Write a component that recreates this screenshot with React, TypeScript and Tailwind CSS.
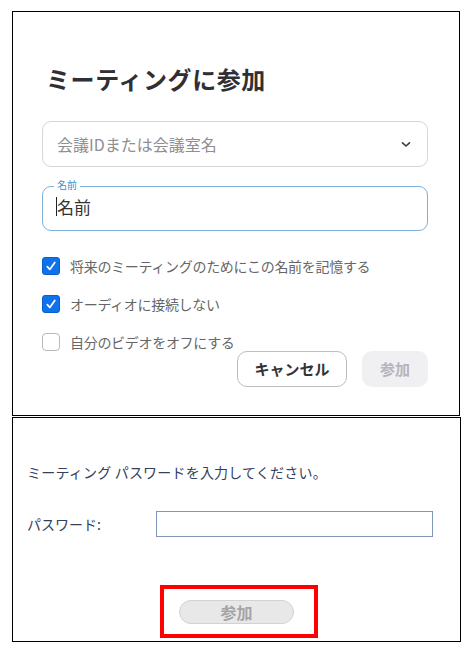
import React from "react";

const JP = { fontFamily: '"Noto Sans CJK JP", "Noto Sans", sans-serif' };

function Check({ checked }: { checked: boolean }) {
  if (checked) {
    return (
      <div className="w-[18px] h-[18px] rounded-[3px] bg-[#0e72ed] border border-[#0a5fc8] flex items-center justify-center shrink-0">
        <svg width="12" height="12" viewBox="0 0 12 12">
          <path d="M2.3 6.6 L4.8 9.4 L9.8 2.4" fill="none" stroke="#ffffff" strokeWidth="1.7" strokeLinecap="round" strokeLinejoin="round" />
        </svg>
      </div>
    );
  }
  return <div className="w-[18px] h-[18px] rounded-[4px] bg-white border-[1.5px] border-[#b9b9b9] shrink-0" />;
}

function Row({ checked, label, className }: { checked: boolean; label: string; className?: string }) {
  return (
    <div className={"flex items-center h-[18px] " + (className ?? "")}>
      <Check checked={checked} />
      <span className="ml-[10px] text-[14px] leading-[18px] tracking-[-0.3px] text-[#666666]">{label}</span>
    </div>
  );
}

export default function App() {
  return (
    <div className="bg-white w-[471px] h-[654px] overflow-hidden" style={JP}>
      <div className="ml-[12px] pt-[11px]">
        {/* Top panel */}
        <div className="w-[448px] h-[405px] border border-black bg-white pl-[29px] flex flex-col">
          <h1 className="mt-[55px] ml-[4px] text-[24px] leading-[24px] font-bold text-[#2f2f35] tracking-[0.6px]">
            ミーティングに参加
          </h1>
          <div className="mt-[30px] w-[386px] h-[46px] rounded-[9px] border border-[#d6d6d6] flex items-center justify-between pl-[14px] pr-[16px]">
            <span className="text-[16px] text-[#8e8e93]">会議IDまたは会議室名</span>
            <svg width="10" height="7" viewBox="0 0 10 7">
              <path d="M1.5 1.8 L5 5 L8.5 1.8" fill="none" stroke="#3a3a3a" strokeWidth="1.6" strokeLinecap="round" strokeLinejoin="round" />
            </svg>
          </div>
          <div className="relative mt-[19px] w-[386px] h-[45px] rounded-[9px] border-[1.5px] border-[#7fb0d8] flex items-center pl-[13px] pb-[4px]">
            <span className="absolute left-[11px] top-[-8px] bg-white px-[3px] text-[10px] leading-[12px] text-[#3d8fd1]">名前</span>
            <span className="w-[1px] h-[19px] bg-[#222]" />
            <span className="text-[17px] leading-[20px] text-[#333]">名前</span>
          </div>
          <Row checked label="将来のミーティングのためにこの名前を記憶する" className="mt-[26px]" />
          <Row checked label="オーディオに接続しない" className="mt-[20px]" />
          <Row checked={false} label="自分のビデオをオフにする" className="mt-[20px]" />
          <div className="w-[386px] flex justify-end gap-[15px]">
            <button className="w-[110px] h-[36px] rounded-[10px] border-[1.5px] border-[#bdbdbd] bg-white text-[15px] font-bold text-[#333]">
              キャンセル
            </button>
            <button className="w-[66px] h-[36px] rounded-[10px] bg-[#f0f0f3] text-[15px] font-bold text-[#b4b4bb]">
              参加
            </button>
          </div>
        </div>
        {/* Bottom panel */}
        <div className="mt-[1px] w-[449px] h-[225px] border border-black bg-white pl-[14px] flex flex-col">
          <p className="mt-[44px] text-[14px] leading-[20px] text-[#34405e] tracking-[0.2px]">
            ミーティング パスワードを入力してください。
          </p>
          <div className="mt-[29px] flex items-center">
            <span className="w-[129px] text-[14px] leading-[20px] text-[#34405e]">パスワード:</span>
            <div className="w-[277px] h-[26px] border border-[#7f96b8] bg-white" />
          </div>
          <div className="mt-[48px] ml-[133px] w-[158px] h-[53px] border-[4px] border-[#ff0000] pl-[15px] pt-[11px]">
            <button className="w-[115px] h-[24px] rounded-full bg-[#e8e8e8] border border-[#d2d2d2] text-[16px] leading-[20px] font-bold text-[#a4a4a4]">
              参加
            </button>
          </div>
        </div>
      </div>
    </div>
  );
}
